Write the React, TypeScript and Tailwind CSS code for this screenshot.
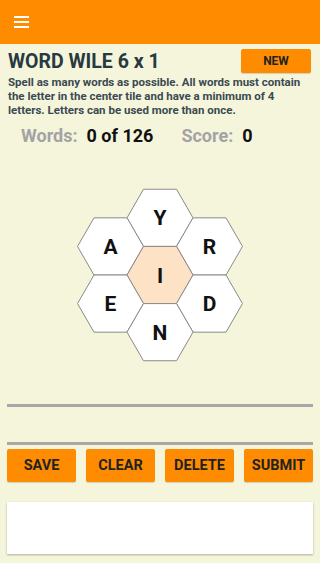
import React from 'react'

const R = 33
const H = (R * Math.sqrt(3)) / 2
const CX = 84
const CY = 88

const tiles = [
  { letter: 'Y', dx: 0, dy: -2 * H },
  { letter: 'A', dx: -1.5 * R, dy: -H },
  { letter: 'R', dx: 1.5 * R, dy: -H },
  { letter: 'I', dx: 0, dy: 0, center: true },
  { letter: 'E', dx: -1.5 * R, dy: H },
  { letter: 'D', dx: 1.5 * R, dy: H },
  { letter: 'N', dx: 0, dy: 2 * H },
]

const hexPoints = (cx: number, cy: number) =>
  [
    [cx - R, cy],
    [cx - R / 2, cy - H],
    [cx + R / 2, cy - H],
    [cx + R, cy],
    [cx + R / 2, cy + H],
    [cx - R / 2, cy + H],
  ]
    .map(([x, y]) => `${x.toFixed(2)},${y.toFixed(2)}`)
    .join(' ')

function Board() {
  return (
    <svg width="168" height="176" viewBox="0 0 168 176" className="block">
      {tiles.map((t) => {
        const x = CX + t.dx
        const y = CY + t.dy
        return (
          <g key={t.letter}>
            <polygon points={hexPoints(x, y)} fill={t.center ? '#fde2c6' : '#ffffff'} stroke="#8a8a8a" strokeWidth="1" />
            <text
              x={x}
              y={y + 7.5}
              textAnchor="middle"
              fontFamily="Roboto, 'Liberation Sans', sans-serif"
              fontWeight="700"
              fontSize="21"
              fill="#111111"
            >
              {t.letter}
            </text>
          </g>
        )
      })}
    </svg>
  )
}

export default function App() {
  return (
    <div className="flex h-[563px] w-[320px] flex-col overflow-hidden bg-[#f5f5dc] font-['Roboto','Liberation_Sans',sans-serif]">
      <header className="flex h-[44px] shrink-0 items-center bg-[#ff8c00] pl-[14px]">
        <div className="flex w-[15px] flex-col gap-[3px]">
          <span className="h-[2px] bg-white" />
          <span className="h-[2px] bg-white" />
          <span className="h-[2px] bg-white" />
        </div>
      </header>

      <main className="flex flex-1 flex-col px-[7px]">
        <div className="mt-[5px] flex items-start justify-between">
          <h1 className="mt-[2px] pl-[1px] text-[19.5px] leading-[22px] font-bold text-[#263a40]">WORD WILE 6 x 1</h1>
          <button className="mr-[2px] h-[24px] w-[70px] rounded-[2px] bg-[#ff8c00] text-[12px] font-bold text-[#222] shadow-[0_1px_1px_rgba(0,0,0,0.15)]">
            NEW
          </button>
        </div>
        <p className="mt-[2px] pl-[1px] text-[11.5px] leading-[14px] font-bold text-[#3a4a50]">
          Spell as many words as possible. All words must contain the letter in the center tile and have a minimum of 4 letters. Letters can be used more than once.
        </p>

        <div className="mt-[9px] flex items-center pl-[14px] text-[18px] leading-[20px] font-bold">
          <span className="text-[#a3a3a3]">Words:</span>
          <span className="ml-[9px] text-[#111]">0 of 126</span>
          <span className="ml-[28px] text-[#a3a3a3]">Score:</span>
          <span className="ml-[9px] text-[#111]">0</span>
        </div>

        <div className="mt-[41px] flex justify-center">
          <Board />
        </div>

        <div className="mt-[41px] h-[3px] bg-[#a8a8a8]" />
        <div className="mt-[35px] h-[3px] bg-[#a8a8a8]" />

        <div className="mt-[4px] grid grid-cols-4 gap-[10px]">
          {['SAVE', 'CLEAR', 'DELETE', 'SUBMIT'].map((label) => (
            <button
              key={label}
              className="h-[33px] rounded-[2px] bg-[#ff8c00] text-[14.5px] font-bold text-[#222] shadow-[0_1px_1px_rgba(0,0,0,0.15)]"
            >
              {label}
            </button>
          ))}
        </div>

        <div className="mt-[20px] h-[52px] bg-white shadow-[0_1px_2px_rgba(0,0,0,0.3)]" />
      </main>
    </div>
  )
}
